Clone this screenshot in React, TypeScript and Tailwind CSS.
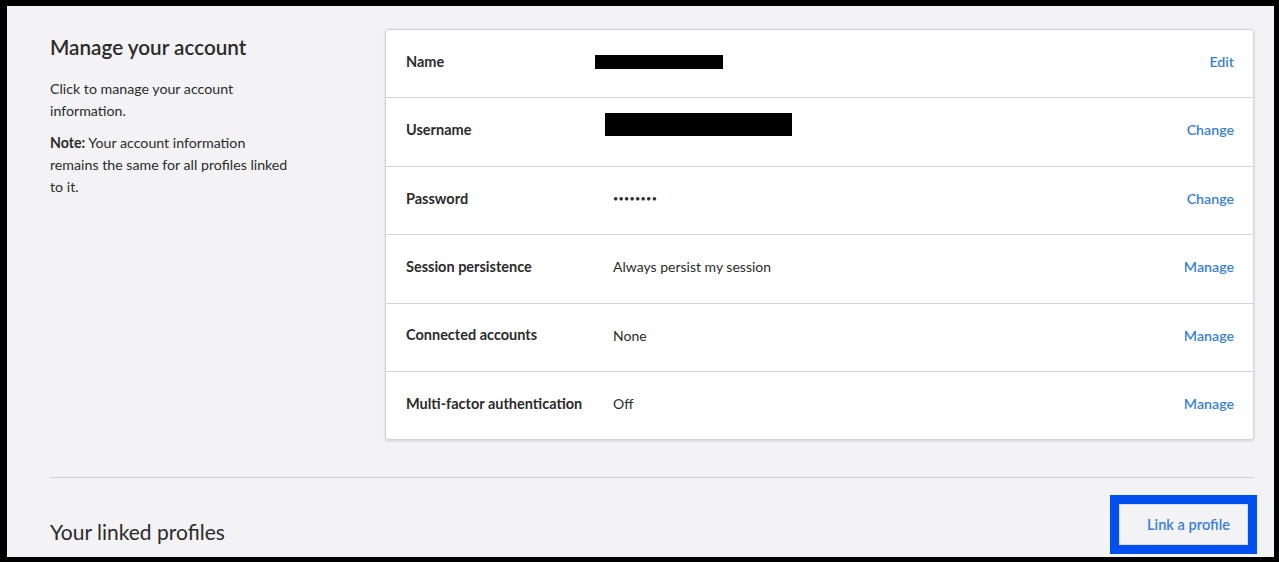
import React from "react";

const rows = [
  { label: "Name", value: <span className="inline-block h-[14px] w-[128px] bg-black ml-[-18px] mt-[1px]" />, action: "Edit" },
  { label: "Username", value: <span className="inline-block h-[23px] w-[187px] bg-black ml-[-8px] mt-[-12px]" />, action: "Change" },
  { label: "Password", value: <span className="text-[9px] tracking-[0.3px]">••••••••</span>, action: "Change" },
  { label: "Session persistence", value: "Always persist my session", action: "Manage" },
  { label: "Connected accounts", value: "None", action: "Manage" },
  { label: "Multi-factor authentication", value: "Off", action: "Manage" },
];

export default function App() {
  return (
    <div
      className="h-[562px] w-[1279px] overflow-hidden border-l-[7px] border-t-[6px] border-r-[5px] border-b-[5px] border-black bg-[#f3f3f5] text-[#2b2b2b]"
      style={{ fontFamily: "Lato, 'Open Sans', sans-serif" }}
    >
      <div className="pl-[43px] pr-[20px] pt-[23px]">
        <div className="flex items-start">
          <div className="w-[335px] shrink-0 pt-[4px]">
            <h1 className="text-[20.7px] leading-[28px] font-semibold">Manage your account</h1>
            <p className="mt-[17px] w-[242px] text-[14.2px] leading-[22px]">Click to manage your account information.</p>
            <p className="mt-[10px] w-[242px] text-[14.2px] leading-[22px]">
              <span className="font-bold">Note:</span> Your account information remains the same for all profiles linked to it.
            </p>
          </div>
          <div className="flex-1 rounded-[3px] border border-[#d4d4d8] bg-white shadow-[0_1px_3px_rgba(0,0,0,0.15)]">
            {rows.map((r, i) => (
              <div
                key={r.label}
                className={`flex items-center pb-[4px] pl-[20px] pr-[19px] ${i > 0 ? "h-[68.4px] border-t border-[#d4d4d8]" : "h-[67.4px]"}`}
              >
                <div className="w-[207px] shrink-0 text-[14.5px] font-bold">{r.label}</div>
                <div className="flex flex-1 items-center text-[14px]">{r.value}</div>
                <a className="text-[14.2px] font-semibold text-[#3a7fd6]">{r.action}</a>
              </div>
            ))}
          </div>
        </div>
        <div className="mt-[37px] border-t border-[#cfcfd3] pt-[17px]">
          <div className="flex items-start justify-between">
            <h2 className="mt-[23px] text-[21px] leading-[28px]">Your linked profiles</h2>
            <div className="mr-[-3px] border-[9px] border-[#0050ef]">
              <button className="flex h-[41px] w-[129px] items-center justify-start border border-[#dcdce0] bg-[#f3f3f5] pl-[27px] text-[14.6px] font-semibold text-[#3a7fd6]">
                Link a profile
              </button>
            </div>
          </div>
        </div>
      </div>
    </div>
  );
}
